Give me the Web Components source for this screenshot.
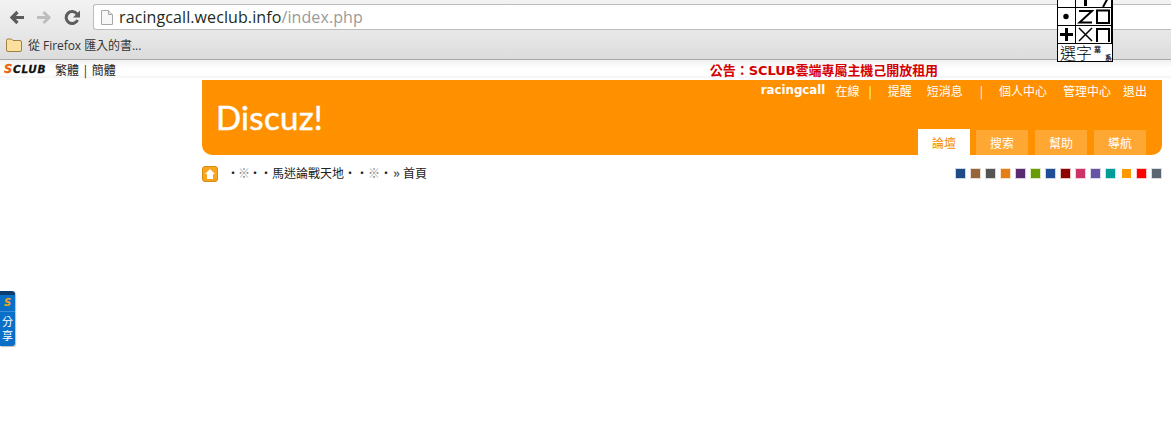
<!DOCTYPE html>
<html><head><meta charset="utf-8"><title>Discuz!</title>
<style>
html,body{margin:0;padding:0;background:#fff;overflow:hidden;height:428px}
body{font:12px "Liberation Sans","Noto Sans CJK TC",sans-serif;color:#222}
</style></head><body>
<browser-chrome></browser-chrome>
<ime-panel></ime-panel>
<top-bar></top-bar>
<forum-page>
  <forum-header></forum-header>
  <forum-crumbs></forum-crumbs>
</forum-page>
<share-tab></share-tab>
<script>
function def(name,html){customElements.define(name,class extends HTMLElement{constructor(){super();this.attachShadow({mode:'open'}).innerHTML=html}})}
def('browser-chrome',`<style>
:host{display:block;height:60px;box-sizing:border-box;border-bottom:1px solid #a9a9a9;background:linear-gradient(#f2f2f2,#e9e9e9 50%,#dcdcdc);font-family:"Open Sans","Noto Sans CJK TC",sans-serif}
.tool{height:30px;display:flex;align-items:center;padding:0 0 0 8px;box-sizing:border-box}
.tool svg.nav{width:17px;height:17px;margin:4px 11px 0 0;flex:none}
.url{margin-left:1px;flex:1;height:26px;margin-top:4px;box-sizing:border-box;background:#fff;border:1px solid #bcbcbc;border-radius:3px 0 0 3px;border-right:0;display:flex;align-items:center;padding-left:7px;font-size:16px;color:#1c2b22;letter-spacing:.1px}
.url svg{margin-right:6px;flex:none}
.url span{color:#9a9a9a}
.marks{height:29px;display:flex;align-items:center;padding:1px 0 0 6px;box-sizing:border-box;font-size:12px;color:#333;letter-spacing:-.05px}
.marks svg{margin-right:6px}
</style>
<div class="tool">
<svg class="nav" viewBox="0 0 17 17"><path d="M16 8.500H5M9.500 3L4 8.500 9.500 14" fill="none" stroke="#5c5c5c" stroke-width="3.2"/></svg>
<svg class="nav" viewBox="0 0 17 17"><path d="M1 8.500h11M7.500 3L13 8.500 7.500 14" fill="none" stroke="#bdbdbd" stroke-width="3"/></svg>
<svg class="nav" viewBox="0 0 17 17"><path d="M13.600 11A6 6 0 1 1 13 5" fill="none" stroke="#5c5c5c" stroke-width="3"/><path d="M16 1.500V8.500H9z" fill="#5c5c5c"/></svg>
<div class="url"><svg width="12" height="15" viewBox="0 0 12 15"><path d="M.5.500h7l4 4v10H.5z" fill="#f7f7f7" stroke="#a8a8a8"/><path d="M7.500.500v4h4" fill="#e4e4e4" stroke="#a8a8a8"/></svg>racingcall.weclub.info<span>/index.php</span></div>
</div>
<div class="marks"><svg width="16" height="14" viewBox="0 0 16 14"><path d="M.5 2.500Q.5 1 2 1h3.500l1.500 1.500h7q1.500 0 1.500 1.500v8q0 1.500-1.500 1.500H2Q.5 13.500.5 12z" fill="#fbdf9f" stroke="#a08243"/></svg>從 Firefox 匯入的書...</div>`);
def('ime-panel',`<style>
:host{position:absolute;left:1057px;top:-10px;display:grid;grid-template-columns:repeat(3,18px);grid-auto-rows:18px;background:#fff;border:1px solid #000;border-width:0 1px;z-index:5;color:#000}
div{box-sizing:border-box;border-right:1px solid #000;border-bottom:1px solid #000;display:flex;align-items:center;justify-content:center;line-height:1}
div:nth-child(3n){border-right:0}
svg{width:17px;height:17px;display:block}
.w{grid-column:span 2;font:16px/17px "Noto Sans CJK TC",sans-serif;border-right:0;font-weight:300}
.s{border-right:0;font:700 7px/8px "Noto Sans CJK TC",sans-serif;color:#334;flex-direction:column;align-items:stretch}
.s b{display:block}.s b+b{text-align:right}
</style>
<div><svg viewBox="0 0 17 17"><path d="M2 8.500h13" stroke="#000" stroke-width="2"/></svg></div>
<div><svg viewBox="0 0 17 17"><path d="M8.500 3v13" stroke="#000" stroke-width="3"/></svg></div>
<div><svg viewBox="0 0 17 17"><path d="M15 6L9 17" stroke="#000" stroke-width="2"/></svg></div>
<div><svg viewBox="0 0 17 17"><circle cx="8" cy="8.500" r="2.700"/></svg></div>
<div><svg viewBox="0 0 17 17"><path d="M2 3h13L2.500 14.500H15" fill="none" stroke="#000" stroke-width="2"/></svg></div>
<div><svg viewBox="0 0 17 17"><rect x="3" y="2.500" width="12" height="12.500" fill="none" stroke="#000" stroke-width="2"/></svg></div>
<div><svg viewBox="0 0 17 17"><path d="M8.500 2v13M2 8.500h13" stroke="#000" stroke-width="3"/></svg></div>
<div><svg viewBox="0 0 17 17"><path d="M2 2l13 13M15 2L2 15" stroke="#000" stroke-width="1.500"/></svg></div>
<div><svg viewBox="0 0 17 17"><path d="M3 16V3h12v13" fill="none" stroke="#000" stroke-width="2"/></svg></div>
<div class="w">選字</div><div class="s"><b>業</b><b>系</b></div>`);
def('top-bar',`<style>
:host{display:flex;height:18px;box-sizing:border-box;align-items:center;padding:1px 0 0 4px;background:linear-gradient(#f1f1f1,#fff 45%,#fff 80%,#f3f3f3);font-size:12px;color:#222;position:relative}
.logo{font:italic 900 10.500px/11px "DejaVu Sans",sans-serif;width:43px;letter-spacing:.7px;color:#111;flex:none;white-space:nowrap;overflow:visible;-webkit-text-stroke:.3px currentColor}
.logo i{color:#e8650c;font-size:11.500px}
.lang{margin-left:8px;font-family:"Noto Sans CJK TC",sans-serif;word-spacing:2.100px}
.notice{margin-left:594px;color:#d40000;font-weight:700;font-family:"DejaVu Sans","Noto Sans CJK TC",sans-serif;font-size:13px;white-space:nowrap;letter-spacing:-.05px}
</style><span class="logo"><i>S</i>CLUB</span><span class="lang">繁體 | 簡體</span><span class="notice">公告：SCLUB雲端專屬主機己開放租用</span>`);
def('forum-page',`<style>:host{display:block;margin:2px 0 0 202px;width:960px}</style><slot></slot>`);
def('forum-header',`<style>
:host{display:flex;flex-direction:column;height:75px;background:#ff9000;border-radius:0 0 10px 10px;box-sizing:border-box;position:relative;color:#fff;font-family:"Noto Sans CJK TC",sans-serif;font-size:12px}
.user{display:flex;justify-content:flex-end;align-items:center;height:20px;padding-right:15px;white-space:nowrap}
.user span{margin-left:16px}.user b{font:700 11.800px "DejaVu Sans",sans-serif;margin-right:-6px}
.user .sep1{margin-left:9px}.user .sep2{margin-left:17px}
.user .a{margin-left:16px}.user .b{margin-left:15px}
.mid{flex:1;display:flex;align-items:flex-start;justify-content:space-between;padding:0 16px 0 14px;min-height:0}
.logo{font:33px/44px Lato,"Open Sans",sans-serif;margin-top:-5px;height:34px;letter-spacing:.3px;-webkit-text-stroke:.5px #fff}
.tabs{display:flex;align-self:flex-end;gap:6px;align-items:flex-end;margin:0}
.tab{width:52px;height:25px;background:#ffa733;display:flex;align-items:center;justify-content:center;margin-left:1px}
.tab.on{height:26px;background:#fff;color:#f08c00;margin-left:0}
.tab.on+.tab{margin-left:0}
</style>
<div class="user"><b>racingcall</b><span>在線</span><span class="sep1">|</span><span class="a">提醒</span><span class="b">短消息</span><span class="sep2">|</span><span>個人中心</span><span>管理中心</span><span style="margin-left:12px">退出</span></div>
<div class="mid"><div class="logo">Discuz!</div><div class="tabs"><div class="tab on">論壇</div><div class="tab">搜索</div><div class="tab">幫助</div><div class="tab">導航</div></div></div>`);
def('forum-crumbs',`<style>
:host{display:flex;align-items:center;height:17px;margin-top:10px;font-family:"Noto Sans CJK TC",sans-serif;font-size:12px;line-height:16px;color:#222;white-space:nowrap}
svg{flex:none;width:16px;height:16px}
.t{margin-left:9px;flex:1;position:relative;top:-.5px}.g{color:#888}
.n{letter-spacing:-1px}
.r{font-size:13px;color:#555;font-weight:700;margin:0 3px 0 1px}
.sw{display:flex;gap:6px;padding-right:1px}
.sw i{width:9px;height:9px;display:block;background:var(--c);box-shadow:0 0 0 1px color-mix(in srgb,var(--c) 22%,#fff)}
.sw i.o{box-shadow:none;margin-left:1px}
</style>
<svg viewBox="0 0 16 16"><rect x=".5" y=".5" width="15" height="15" rx="2.500" fill="#f9a51e" stroke="#d98a10"/><path d="M8 3L3 8h2v5h6V8h2z" fill="#fff"/></svg>
<span class="t"><span class="n">・<span class="g">※</span>・</span>・馬迷論戰天地・・<span class="g">※</span>・<span class="r">»</span>首頁</span>
<span class="sw"><i style="--c:#1e4a85"></i><i style="--c:#96663a"></i><i style="--c:#555"></i><i style="--c:#e67e17"></i><i style="--c:#5a2a72"></i><i style="--c:#699c00"></i><i style="--c:#1f4e96"></i><i style="--c:#8f0000"></i><i style="--c:#cc3366"></i><i style="--c:#6655a5"></i><i style="--c:#009c99"></i><i class="o" style="--c:#ff9900"></i><i style="--c:#ff0000"></i><i style="--c:#5a6672"></i></span>`);
def('share-tab',`<style>
:host{position:absolute;left:0;top:291px;width:15px;height:55px;background:#0a6fc6;border-radius:0 3px 3px 0;color:#fff;font:11px/14px "Noto Sans CJK TC",sans-serif;text-align:center;box-sizing:border-box;border-top:4px solid #0d3d70;box-shadow:1px 1px 1px rgba(0,0,0,.25)}
.s{font:italic 900 10px/15px "DejaVu Sans",sans-serif;color:#f5a81c;height:16px;border-bottom:1px solid #3c8cd8;margin-bottom:2px}
</style><div class="s">S</div>分<br>享`);
</script></body></html>
